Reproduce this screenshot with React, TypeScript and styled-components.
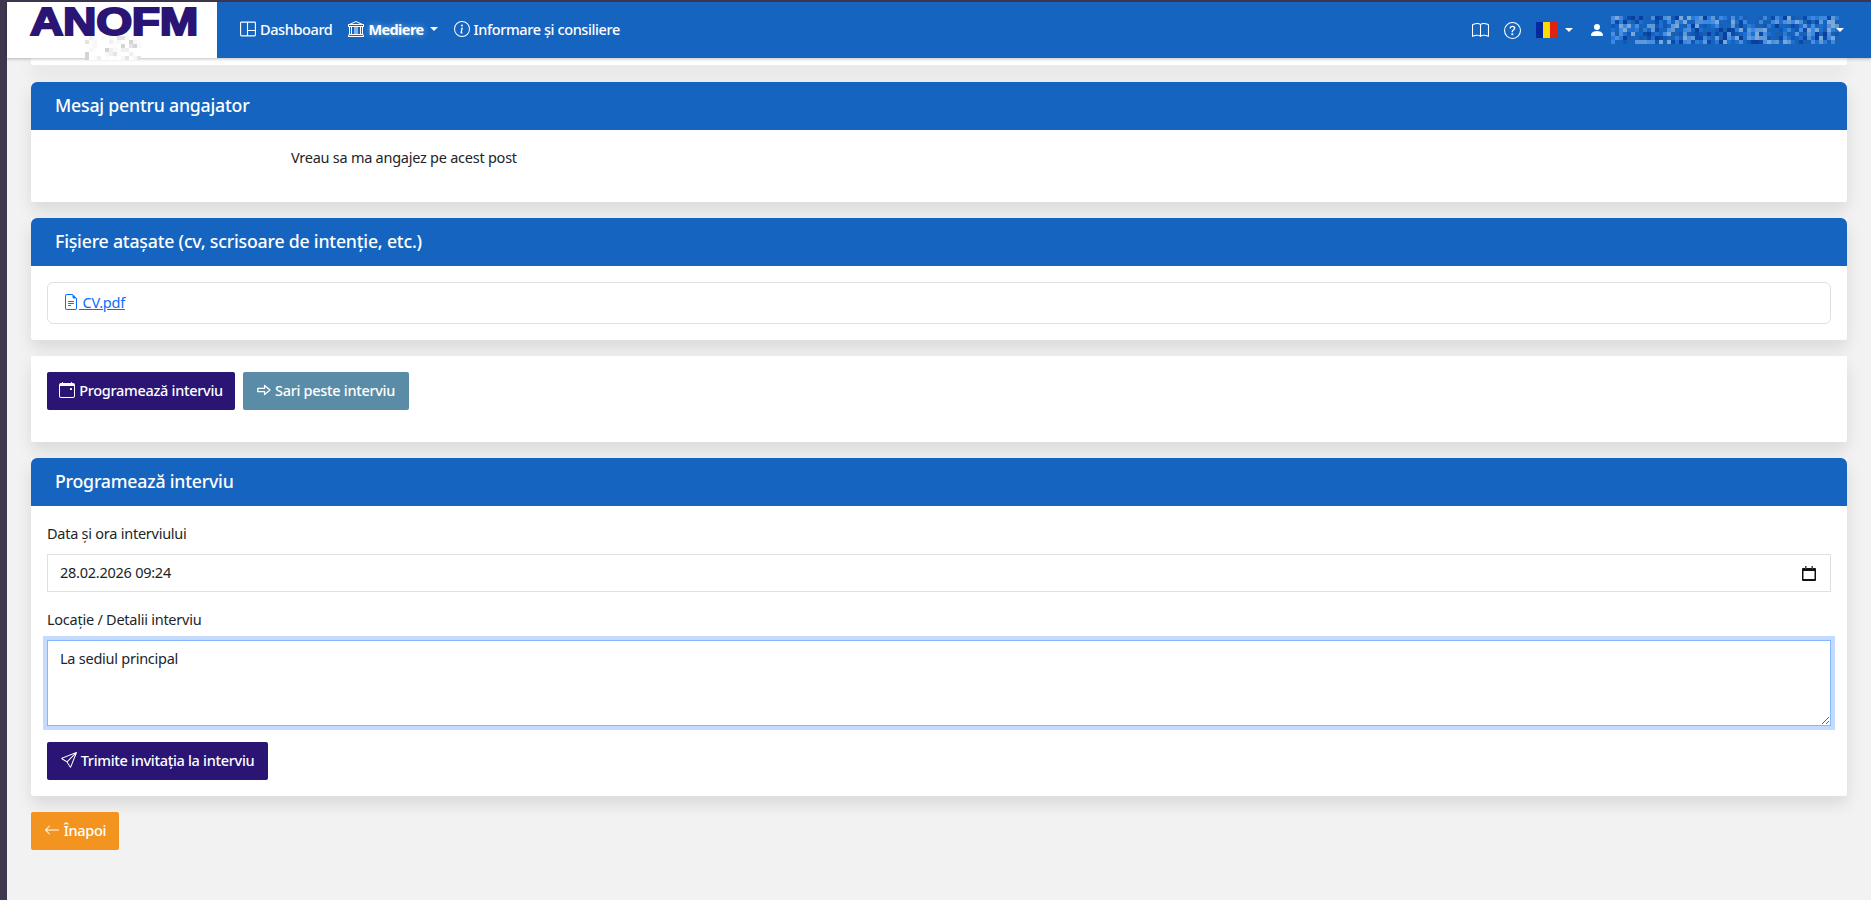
import { useMemo } from 'react';
import styled, { createGlobalStyle } from 'styled-components';
import {
  BsArrowLeft,
  BsBank,
  BsBook,
  BsCalendarEvent,
  BsFileEarmarkText,
  BsInfoCircle,
  BsPersonFill,
  BsQuestionCircle,
  BsSend,
} from 'react-icons/bs';

const GlobalStyle = createGlobalStyle`
  * { box-sizing: border-box; }
  html, body { margin: 0; height: 100%; overflow: hidden; }
  body {
    background: #3f3650;
    font-family: "Noto Sans", "Open Sans", sans-serif;
    font-size: 14.5px;
    letter-spacing: -0.25px;
    line-height: 24px;
    color: #212529;
  }
`;

const Frame = styled.div`
  height: 900px;
  padding: 2px 0 0 7px;
`;

const Page = styled.div`
  height: 898px;
  background: #f2f2f2;
`;

const Navbar = styled.header`
  position: relative;
  z-index: 2;
  height: 56px;
  display: flex;
  align-items: center;
  background: #1565c0;
  color: #fff;
  box-shadow: 0 1px 3px rgba(0, 0, 0, 0.25);
`;

const Brand = styled.div`
  position: relative;
  width: 210px;
  height: 56px;
  flex: none;
  background: #fff;
  margin-right: 23px;
`;

const LogoArt = styled.svg`
  display: block;
  margin-top: -2px;
`;

const BrandBlur = styled.div`
  position: absolute;
  left: 78px;
  top: 34px;
  line-height: 0;
`;

const NavLink = styled.a<{ $active?: boolean }>`
  display: flex;
  align-items: center;
  gap: 4px;
  margin-right: 16px;
  padding-bottom: 2px;
  color: #fff;
  font-weight: ${(p) => (p.$active ? 700 : 500)};
  letter-spacing: ${(p) => (p.$active ? '-0.6px' : '-0.4px')};
  white-space: nowrap;
  text-shadow: ${(p) => (p.$active ? '0 0 6px rgba(255,255,255,.45)' : 'none')};
  svg { font-size: 16px; flex: none; }
`;

const Caret = styled.span<{ $gap?: number }>`
  display: inline-block;
  flex: none;
  width: 0;
  height: 0;
  margin-left: ${(p) => p.$gap ?? 2}px;
  border-top: 4px solid #fff;
  border-left: 4px solid transparent;
  border-right: 4px solid transparent;
`;

const NavRight = styled.div`
  margin-left: auto;
  display: flex;
  align-items: center;
  padding-right: 27px;
`;

const NavIcon = styled.span`
  display: flex;
  margin-right: 15px;
  font-size: 17px;
`;

const Flag = styled.span`
  display: flex;
  width: 21px;
  height: 16px;
  i { flex: 1; }
  i:nth-child(1) { background: #002b9c; }
  i:nth-child(2) { background: #fcdc00; }
  i:nth-child(3) { background: #e0220f; }
`;

const FlagMenu = styled.span`
  display: flex;
  align-items: center;
  margin-right: 16px;
`;

const UserMenu = styled.span`
  display: flex;
  align-items: center;
  svg { flex: none; }
`;

const UserBlur = styled.span`
  display: block;
  line-height: 0;
  margin-left: 6px;
`;

const Main = styled.main`
  padding: 0 24px;
  display: flex;
  flex-direction: column;
  gap: 16px;
  align-items: flex-start;
  > section { align-self: stretch; }
`;

const Card = styled.section`
  background: #fff;
  border-radius: 0 0 2px 2px;
  box-shadow: 0 8px 16px rgba(0, 0, 0, 0.1);
`;

const Sliver = styled(Card)`
  height: 7px;
  margin-bottom: 1px;
`;

const CardHeader = styled.h2`
  margin: 0;
  height: 48px;
  padding: 0 24px 2px;
  display: flex;
  align-items: center;
  background: #1565c0;
  border-radius: 6px 6px 0 0;
  color: #fff;
  font-size: 17.7px;
  font-weight: 500;
  letter-spacing: -0.2px;
`;

const CardBody = styled.div<{ $bottom?: number }>`
  padding: 16px 16px ${(p) => p.$bottom ?? 16}px;
`;

const MessageText = styled.p`
  margin: -1px 0 17px 244px;
`;

const FileRow = styled.div`
  height: 42px;
  padding: 0 16px 2px;
  display: flex;
  align-items: center;
  border: 1px solid #dfe0e6;
  border-radius: 6px;
`;

const FileLink = styled.a`
  display: flex;
  align-items: center;
  color: #0d6efd;
  text-decoration: underline;
  white-space: pre;
  svg { font-size: 16px; margin-left: -1px; }
`;

const ButtonRow = styled.div`
  display: flex;
  gap: 8px;
`;

const Button = styled.button<{ $bg: string; $width: number }>`
  height: 38px;
  width: ${(p) => p.$width}px;
  padding: 0 0 2px;
  display: flex;
  align-items: center;
  justify-content: center;
  gap: 4px;
  border: 0;
  border-radius: 2px;
  background: ${(p) => p.$bg};
  color: #fff;
  font: inherit;
  font-weight: 500;
  letter-spacing: -0.3px;
  white-space: nowrap;
  svg { font-size: 16px; flex: none; }
`;

const Label = styled.label`
  display: block;
  margin: -1px 0 9px;
`;

const Field = styled.div`
  margin-bottom: 16px;
`;

const DateField = styled.div`
  height: 38px;
  padding: 0 12px 2px;
  display: flex;
  align-items: center;
  justify-content: space-between;
  border: 1px solid #dfe0e6;
`;

const DateIcon = styled.svg`
  display: block;
  margin: 2px 2px 0 0;
`;

const Area = styled.textarea`
  display: block;
  width: 100%;
  height: 86px;
  padding: 5px 12px;
  border: 1px solid #86b7fe;
  border-radius: 0;
  outline: none;
  box-shadow: 0 0 0 4px #c2dbfe;
  font: inherit;
  letter-spacing: inherit;
  color: inherit;
  resize: vertical;
`;

function Mosaic({ cols, rows, size, palette, seed }: { cols: number; rows: number; size: number; palette: string[]; seed: number }) {
  // pixelated block, the same every run
  const cells = useMemo(() => {
    let s = seed;
    return Array.from({ length: cols * rows }, () => {
      s = (s * 1664525 + 1013904223) >>> 0;
      return palette[(s >>> 16) % palette.length];
    });
  }, [cols, rows, palette, seed]);
  return (
    <svg width={cols * size} height={rows * size} shapeRendering="crispEdges">
      {cells.map((c, i) => (
        <rect key={i} x={(i % cols) * size} y={Math.floor(i / cols) * size} width={size} height={size} fill={c} />
      ))}
    </svg>
  );
}

function DashboardIcon() {
  return (
    <svg width="16" height="16" viewBox="0 0 16 16" fill="none" stroke="#fff" strokeWidth="1.1">
      <rect x="0.6" y="1.1" width="14.8" height="13.8" rx="0.8" />
      <path d="M7.5 1v14M7.5 9.5H15.5" />
    </svg>
  );
}

function OutlineArrow() {
  return (
    <svg width="14" height="12" viewBox="0 0 14 12" fill="none" stroke="#fff" strokeWidth="1.3" strokeLinejoin="round">
      <path d="M0.8 4.3H7.6V1.4L13 6L7.6 10.6V7.7H0.8Z" />
    </svg>
  );
}

const blues = ['#1565c0', '#0d5ab8', '#0b4aa8', '#1f6fd0', '#2c7ad8', '#3b87e4', '#5f9ad8', '#7aa8d8', '#0a3f9c', '#1a5fb0', '#4a8ee0', '#1565c0'];
const greys = ['#ffffff', '#f8f8f8', '#f0f0f0', '#e4e4e4', '#fcfcfc', '#d4d4d4', '#ffffff', '#ffffff'];

export default function App() {
  return (
    <>
      <GlobalStyle />
      <Frame>
        <Page>
          <Navbar>
            <Brand>
              <LogoArt width="210" height="46" viewBox="0 0 210 46">
                <text
                  x="23"
                  y="35"
                  fontFamily="Liberation Sans"
                  fontWeight="700"
                  fontSize="38"
                  fill="#2a1574"
                  stroke="#2a1574"
                  strokeWidth="2"
                  textLength="168"
                  lengthAdjust="spacingAndGlyphs"
                >
                  ANOFM
                </text>
              </LogoArt>
              <BrandBlur>
                <Mosaic cols={14} rows={6} size={4} palette={greys} seed={7} />
              </BrandBlur>
            </Brand>
            <NavLink>
              <DashboardIcon />
              Dashboard
            </NavLink>
            <NavLink $active>
              <BsBank />
              Mediere
              <Caret />
            </NavLink>
            <NavLink>
              <BsInfoCircle />
              Informare și consiliere
            </NavLink>
            <NavRight>
              <NavIcon>
                <BsBook />
              </NavIcon>
              <NavIcon>
                <BsQuestionCircle />
              </NavIcon>
              <FlagMenu>
                <Flag>
                  <i />
                  <i />
                  <i />
                </Flag>
                <Caret $gap={8} />
              </FlagMenu>
              <UserMenu>
                <BsPersonFill size={16} />
                <UserBlur>
                  <Mosaic cols={57} rows={7} size={4} palette={blues} seed={31} />
                </UserBlur>
                <Caret $gap={-3} />
              </UserMenu>
            </NavRight>
          </Navbar>

          <Main>
            <Sliver />
            <Card>
              <CardHeader>Mesaj pentru angajator</CardHeader>
              <CardBody>
                <MessageText>Vreau sa ma angajez pe acest post</MessageText>
              </CardBody>
            </Card>

            <Card>
              <CardHeader>Fișiere atașate (cv, scrisoare de intenție, etc.)</CardHeader>
              <CardBody>
                <FileRow>
                  <FileLink>
                    <BsFileEarmarkText /> CV.pdf
                  </FileLink>
                </FileRow>
              </CardBody>
            </Card>

            <Card>
              <CardBody $bottom={32}>
                <ButtonRow>
                  <Button $bg="#2a1574" $width={188}>
                    <BsCalendarEvent />
                    Programează interviu
                  </Button>
                  <Button $bg="#5a8ca8" $width={166}>
                    <OutlineArrow />
                    Sari peste interviu
                  </Button>
                </ButtonRow>
              </CardBody>
            </Card>

            <Card>
              <CardHeader>Programează interviu</CardHeader>
              <CardBody>
                <Field>
                  <Label>Data și ora interviului</Label>
                  <DateField>
                    28.02.2026 09:24
                    <DateIcon width="14" height="15" viewBox="0 0 14 15">
                      <path d="M1 2h12a1 1 0 0 1 1 1v11a1 1 0 0 1-1 1H1a1 1 0 0 1-1-1V3a1 1 0 0 1 1-1z" fill="#111" />
                      <rect x="3" y="0" width="1.5" height="3" fill="#444" />
                      <rect x="9.5" y="0" width="1.5" height="3" fill="#444" />
                      <rect x="1.5" y="5" width="11" height="8" fill="#fff" />
                    </DateIcon>
                  </DateField>
                </Field>
                <Field>
                  <Label>Locație / Detalii interviu</Label>
                  <Area readOnly value="La sediul principal" />
                </Field>
                <Button $bg="#2a1574" $width={221}>
                  <BsSend />
                  Trimite invitația la interviu
                </Button>
              </CardBody>
            </Card>

            <Button $bg="#f39420" $width={88}>
              <BsArrowLeft />
              Înapoi
            </Button>
          </Main>
        </Page>
      </Frame>
    </>
  );
}
